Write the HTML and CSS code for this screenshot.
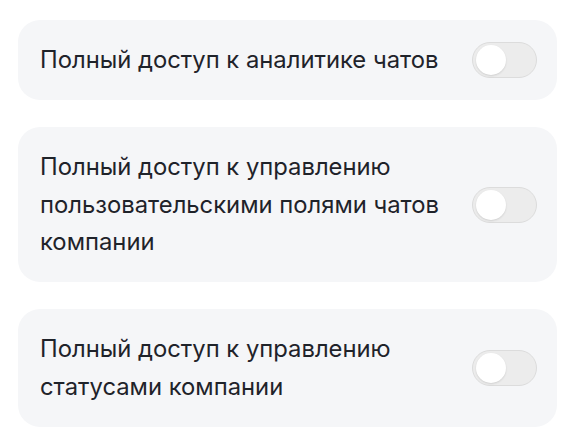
FILE: index.html
```html
<!DOCTYPE html>
<html lang="ru">
<head>
<meta charset="utf-8">
<link rel="stylesheet" href="styles.css">
</head>
<body>
<div class="list">
  <div class="card">
    <div class="label">Полный доступ к аналитике чатов</div>
    <div class="toggle"><span class="knob"></span></div>
  </div>
  <div class="card">
    <div class="label">Полный доступ к управлению пользовательскими полями чатов компании</div>
    <div class="toggle"><span class="knob"></span></div>
  </div>
  <div class="card">
    <div class="label">Полный доступ к управлению статусами компании</div>
    <div class="toggle"><span class="knob"></span></div>
  </div>
</div>
</body>
</html>
```

FILE: styles.css
```css
html, body {
  margin: 0;
  padding: 0;
  background: #ffffff;
}
body {
  font-family: Inter, "Noto Sans", sans-serif;
  color: #1f232a;
}
.list {
  display: flex;
  flex-direction: column;
  gap: 27px;
  padding: 20px 19px 0 18px;
}
.card {
  display: flex;
  align-items: center;
  justify-content: space-between;
  gap: 20px;
  background: #f5f6f8;
  border-radius: 22px;
  padding: 21.25px 20px 21.25px 22px;
}
.label {
  font-size: 23.8px;
  line-height: 37.5px;
  max-width: 412px;
}
.toggle {
  flex: 0 0 auto;
  width: 65px;
  height: 36px;
  box-sizing: border-box;
  border-radius: 18px;
  background: #ececec;
  border: 1px solid #dcdcdc;
  display: flex;
  align-items: center;
  padding-left: 3px;
}
.knob {
  width: 30px;
  height: 30px;
  border-radius: 50%;
  background: #ffffff;
  box-shadow: 0 1px 2px rgba(0,0,0,0.12);
}
```
